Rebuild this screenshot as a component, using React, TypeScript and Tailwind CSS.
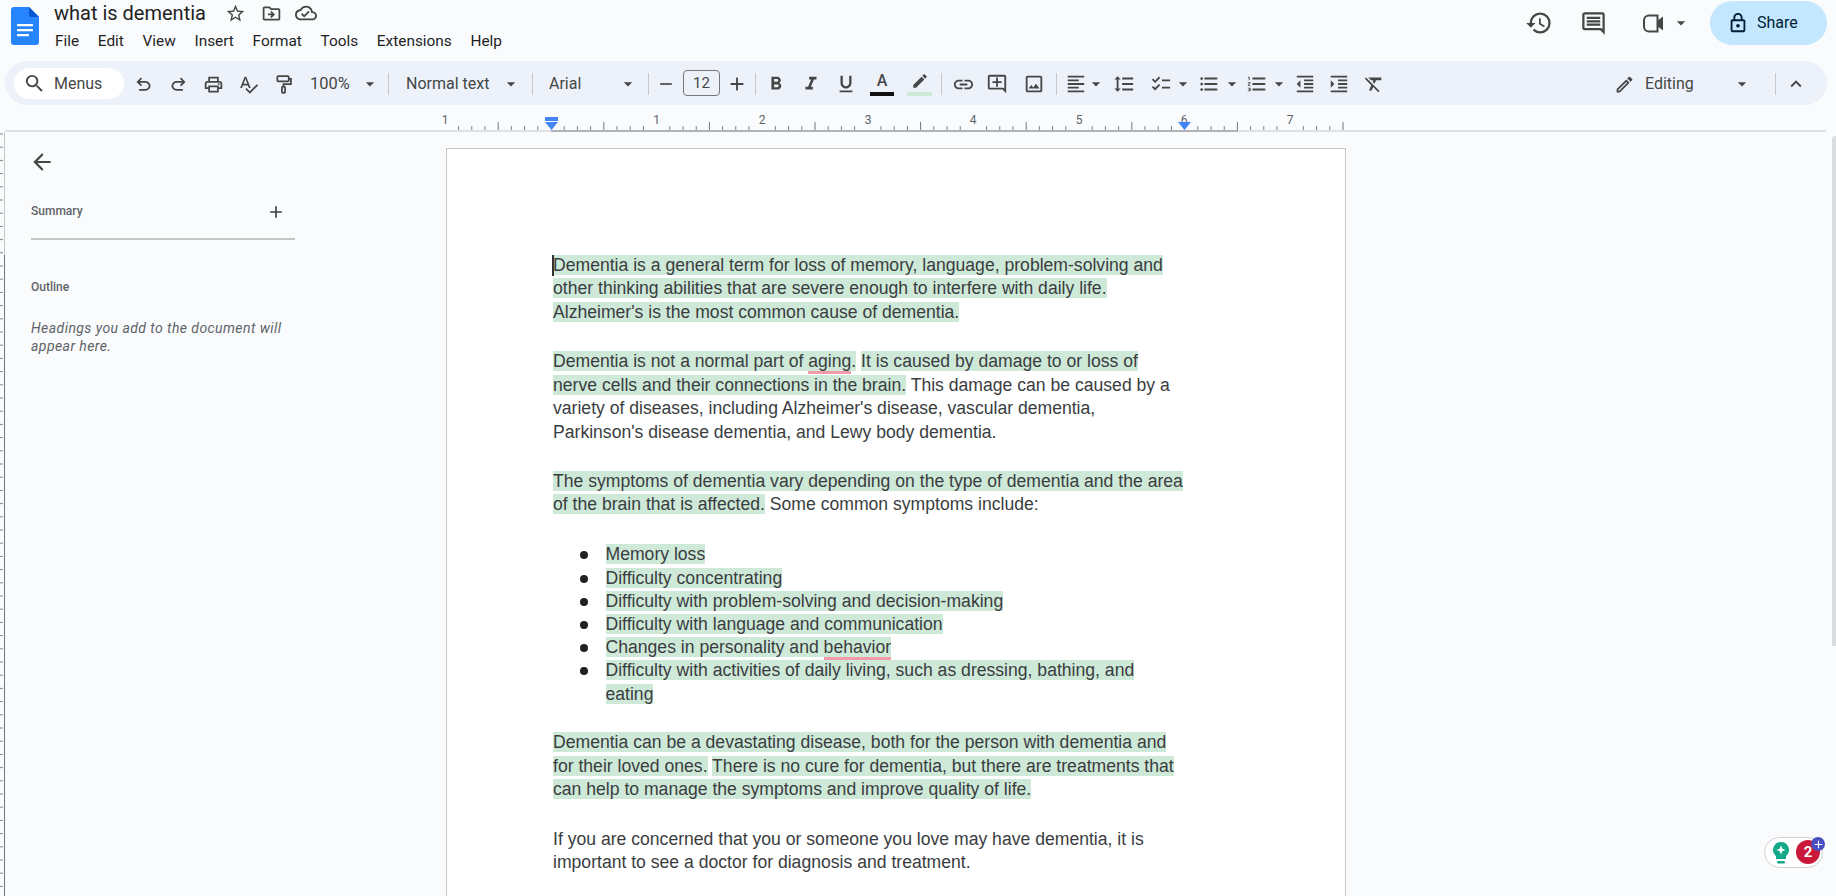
import React from "react";
import {
  MdSearch, MdOutlinePrint, MdOutlineSpellcheck, MdArrowDropDown,
  MdRemove, MdAdd, MdFormatBold, MdFormatItalic, MdFormatUnderlined, MdEdit, MdLink, MdOutlineAddComment,
  MdOutlineImage, MdFormatAlignLeft, MdFormatLineSpacing, MdChecklist, MdFormatListBulleted,
  MdFormatListNumbered, MdFormatIndentDecrease, MdFormatIndentIncrease, MdFormatClear, MdOutlineEdit,
  MdKeyboardArrowUp, MdHistory, MdOutlineComment, MdOutlineLock, MdArrowBack,
  MdStarBorder, MdOutlineDriveFileMove, MdOutlineCloudDone,
} from "react-icons/md";

const Slot = ({ className, children }: { className: string; children: React.ReactNode }) => (
  <span className={"flex items-center justify-center shrink-0 text-[#444746] " + className}>{children}</span>
);
const Sep = ({ className }: { className: string }) => (
  <span className={"w-px h-[22px] bg-[#c7c9cc] shrink-0 " + className} />
);
const Caret = ({ className }: { className: string }) => (
  <Slot className={"w-5 " + className}><MdArrowDropDown size={20} /></Slot>
);

const UndoIcon = () => (
  <svg width="21" height="21" viewBox="0 -960 960 960" fill="currentColor">
    <path d="M280-200v-80h284q63 0 109.5-40T720-420q0-60-46.5-100T564-560H312l104 104-56 56-200-200 200-200 56 56-104 104h252q97 0 166.5 63T800-420q0 94-69.5 157T564-200H280Z" />
  </svg>
);
const RedoIcon = () => (
  <svg width="21" height="21" viewBox="0 -960 960 960" fill="currentColor">
    <path d="M396-200q-97 0-166.5-63T160-420q0-94 69.5-157T396-640h252L544-744l56-56 200 200-200 200-56-56 104-104H396q-63 0-109.5 40T240-420q0 60 46.5 100T396-280h284v80H396Z" />
  </svg>
);
const PaintIcon = () => (
  <svg width="21" height="21" viewBox="0 0 24 24" fill="none" stroke="currentColor" strokeWidth="2">
    <rect x="5" y="2.5" width="13" height="6" rx="1" />
    <path d="M18 5.5h2.5v6H12v3" />
    <rect x="10.2" y="14.5" width="3.6" height="7" rx="1" />
  </svg>
);
const VideoIcon = () => (
  <svg width="25" height="25" viewBox="0 0 25 25" fill="none">
    <path d="M8 4.5h8.5v16H8A5 5 0 0 1 3 15.5v-6A5 5 0 0 1 8 4.5z" stroke="currentColor" strokeWidth="2" />
    <path d="M16 10l6-4.5v14L16 15z" fill="currentColor" />
  </svg>
);

function DocsLogo() {
  return (
    <svg width="28" height="38" viewBox="0 0 28 38" className="shrink-0">
      <path d="M3 0h15l10 10v25a3 3 0 0 1-3 3H3a3 3 0 0 1-3-3V3a3 3 0 0 1 3-3z" fill="#2684fc" />
      <path d="M18 0l10 10H20a2 2 0 0 1-2-2z" fill="#0b57d0" />
      <rect x="6" y="17" width="16" height="2.2" rx="0.5" fill="#fff" />
      <rect x="6" y="22" width="16" height="2.2" rx="0.5" fill="#fff" />
      <rect x="6" y="27" width="12" height="2.2" rx="0.5" fill="#fff" />
    </svg>
  );
}

function HRuler() {
  const ticks: React.ReactNode[] = [];
  const zero = 551;
  const step = 105.6 / 8;
  for (let i = -8; i <= 60; i++) {
    const x = zero + i * step;
    if (x > 1345) break;
    if (i % 8 === 0 && i !== 60) continue;
    const half = i % 4 === 0;
    ticks.push(
      <line key={i} x1={x} x2={x} y1={half ? 17 : 21} y2={25} stroke={half ? "#70757a" : "#80868b"} strokeWidth="1" />
    );
  }
  const nums = [[445, "1"], [656.6, "1"], [762, "2"], [868, "3"], [973, "4"], [1079, "5"], [1184, "6"], [1290, "7"]] as const;
  return (
    <svg width="1836" height="27" viewBox="0 0 1836 27" className="block shrink-0">
      {ticks}
      <line x1="5" x2="1826" y1="26" y2="26" stroke="#c4c7c5" strokeWidth="1.2" />
      <line x1="551" x2="1238" y1="26" y2="26" stroke="#80868b" strokeWidth="1.2" />
      {nums.map(([x, t], i) => (
        <text key={i} x={x} y="19" textAnchor="middle" fontSize="12" fontFamily="Roboto, sans-serif" fill="#5f6368">{t}</text>
      ))}
      <rect x="545" y="12" width="13" height="4" fill="#4285f4" />
      <path d="M545 17h13l-6.5 8z" fill="#4285f4" />
      <path d="M1178 17h13l-6.5 8z" fill="#4285f4" />
    </svg>
  );
}

function VRuler() {
  const ticks: React.ReactNode[] = [];
  for (let i = 0; i < 60; i++) {
    const y = 2 + i * 13.2;
    ticks.push(<line key={i} x1="0" x2="3" y1={y} y2={y} stroke="#80868b" strokeWidth="1" />);
  }
  return (
    <svg width="5" height="765" viewBox="0 0 5 765" className="block shrink-0">
      <line x1="4.5" x2="4.5" y1="0" y2="123" stroke="#c4c7c5" strokeWidth="1" />
      <line x1="4.5" x2="4.5" y1="123" y2="765" stroke="#70757a" strokeWidth="1" />
      {ticks}
    </svg>
  );
}

const H = ({ children }: { children: React.ReactNode }) => <span className="bg-[#cfe9d9]">{children}</span>;
const Spell = ({ children }: { children: React.ReactNode }) => (
  <span className="border-b-[3px] border-[#f29cab]">{children}</span>
);

function Li({ children }: { children: React.ReactNode }) {
  return (
    <li className="flex leading-[23.2px]">
      <span className="w-[52.5px] shrink-0 flex justify-start pl-[27px] pt-[8px]">
        <span className="block w-2 h-2 rounded-full bg-[#222]" />
      </span>
      <span>{children}</span>
    </li>
  );
}

export default function App() {
  return (
    <div className="w-[1836px] h-[896px] overflow-hidden bg-[#f9fbfd] font-['Roboto',sans-serif] relative">
      {/* title bar */}
      <header className="h-[61px] flex">
        <div className="ml-[11px] mt-[7px]"><DocsLogo /></div>
        <div className="ml-[15px] flex flex-col">
          <div className="flex items-center h-[26px]">
            <span className="w-[151px] text-[20px] leading-[26px] text-[#1f1f1f] whitespace-nowrap">what is dementia</span>
            <Slot className="w-6 ml-[18px]"><MdStarBorder size={21} /></Slot>
            <Slot className="w-6 ml-[12px]"><MdOutlineDriveFileMove size={21} /></Slot>
            <Slot className="w-6 ml-[11px]"><MdOutlineCloudDone size={22} /></Slot>
          </div>
          <nav className="flex gap-[18.67px] mt-[4px] text-[15.4px] leading-[22px] text-[#1f1f1f] ml-[1px]">
            <span>File</span><span>Edit</span><span>View</span><span>Insert</span><span>Format</span><span>Tools</span><span>Extensions</span><span>Help</span>
          </nav>
        </div>
        <div className="ml-auto flex items-start mr-[9px] mt-[1px]">
          <Slot className="w-7 h-[44px]"><MdHistory size={28} /></Slot>
          <Slot className="w-7 h-[44px] ml-[26px]"><MdOutlineComment size={27} /></Slot>
          <Slot className="w-7 h-[44px] ml-[32px]"><VideoIcon /></Slot>
          <Slot className="w-5 h-[44px] ml-[4px]"><MdArrowDropDown size={20} /></Slot>
          <button className="ml-[19px] w-[117px] h-[44px] rounded-full bg-[#c2e7ff] flex items-center text-[#001d35] text-[16px]">
            <span className="ml-[17px] flex"><MdOutlineLock size={22} /></span>
            <span className="ml-[8px]">Share</span>
          </button>
        </div>
      </header>

      {/* toolbar */}
      <div className="mx-[5px] mr-[9px] h-[44px] pt-[2px] rounded-full bg-[#edf2fa] flex items-center text-[#444746] text-[16px]">
        <div className="ml-[9px] w-[110px] h-[31px] -mt-[2px] rounded-full bg-white flex items-center shrink-0">
          <Slot className="w-6 ml-[8px]"><MdSearch size={23} /></Slot>
          <span className="ml-[8px] mt-[2px]">Menus</span>
        </div>
        <Slot className="w-[35px] ml-[1.5px]"><UndoIcon /></Slot>
        <Slot className="w-[35px]"><RedoIcon /></Slot>
        <Slot className="w-[35px]"><MdOutlinePrint size={21} /></Slot>
        <Slot className="w-[35px]"><MdOutlineSpellcheck size={21} /></Slot>
        <Slot className="w-[35px]"><PaintIcon /></Slot>
        <span className="ml-[9.5px] w-[40px] shrink-0 text-[16.4px]">100%</span>
        <Caret className="ml-[10px]" />
        <Sep className="ml-[8px]" />
        <span className="ml-[17px] w-[83px] shrink-0 whitespace-nowrap">Normal text</span>
        <Caret className="ml-[12px]" />
        <Sep className="ml-[11px]" />
        <span className="ml-[16px] w-[33px] shrink-0">Arial</span>
        <Caret className="ml-[36px]" />
        <Sep className="ml-[10px]" />
        <Slot className="w-6 ml-[5px]"><MdRemove size={20} /></Slot>
        <span className="ml-[5px] w-[37px] h-[26px] -mt-[2px] shrink-0 rounded-[4px] border border-[#747775] flex items-center justify-center text-[15px]">12</span>
        <Slot className="w-6 ml-[5px]"><MdAdd size={22} /></Slot>
        <Sep className="ml-[6px]" />
        <Slot className="w-[35px] ml-[2.5px]"><MdFormatBold size={22} /></Slot>
        <Slot className="w-[35px]"><MdFormatItalic size={22} /></Slot>
        <Slot className="w-[35px]"><MdFormatUnderlined size={22} /></Slot>
        <span className="w-[24px] ml-[6.5px] shrink-0 flex flex-col items-center -mt-[2px]">
          <span className="text-[16px] leading-[20px] font-medium">A</span>
          <span className="block w-full h-[4px] bg-[#111] mt-[1px]" />
        </span>
        <span className="w-[25px] ml-[13px] shrink-0 flex flex-col items-center -mt-[2px]">
          <span className="flex h-[20px] items-center"><MdEdit size={18} /></span>
          <span className="block w-full h-[4px] bg-[#cfe9d9] mt-[1px]" />
        </span>
        <Sep className="ml-[9px]" />
        <Slot className="w-[34px] ml-[4px]"><MdLink size={23} /></Slot>
        <Slot className="w-[34px]"><MdOutlineAddComment size={22} /></Slot>
        <Slot className="w-[34px] ml-[3px]"><MdOutlineImage size={22} /></Slot>
        <Sep className="ml-[5px]" />
        <Slot className="w-6 ml-[7px]"><MdFormatAlignLeft size={22} /></Slot>
        <Caret className="-ml-[2px]" />
        <Slot className="w-6 ml-[6px]"><MdFormatLineSpacing size={22} /></Slot>
        <Slot className="w-6 ml-[13px]"><MdChecklist size={22} /></Slot>
        <Caret className="" />
        <Slot className="w-6 ml-[4px]"><MdFormatListBulleted size={22} /></Slot>
        <Caret className="ml-[1px]" />
        <Slot className="w-6 ml-[3px]"><MdFormatListNumbered size={22} /></Slot>
        <Caret className="" />
        <Slot className="w-6 ml-[4px]"><MdFormatIndentDecrease size={22} /></Slot>
        <Slot className="w-6 ml-[10px]"><MdFormatIndentIncrease size={22} /></Slot>
        <Slot className="w-6 ml-[11px]"><MdFormatClear size={22} /></Slot>
        <Slot className="w-[22px] ml-auto"><MdOutlineEdit size={21} /></Slot>
        <span className="ml-[10px] w-[49px] shrink-0">Editing</span>
        <Caret className="ml-[38px]" />
        <Sep className="ml-[23px]" />
        <Slot className="w-6 ml-[8px] mr-[19px]"><MdKeyboardArrowUp size={22} /></Slot>
      </div>

      {/* ruler */}
      <HRuler />

      {/* main */}
      <main className="flex">
        <VRuler />
        <aside className="w-[441px] shrink-0 pl-[26px] text-[#5f6368]">
          <div className="mt-[17px] -ml-[2px] flex text-[#444746]"><MdArrowBack size={26} /></div>
          <div className="mt-[25px] w-[264px] h-[40px] border-b-2 border-[#c4c7c5] flex justify-between items-start">
            <span className="text-[12px] leading-[16px] font-medium mt-[3px]">Summary</span>
            <span className="mr-[9px] text-[#3c4043] flex mt-[2px]"><MdAdd size={20} /></span>
          </div>
          <div className="mt-[39px] text-[12px] leading-[16px] font-medium">Outline</div>
          <p className="mt-[24px] w-[264px] text-[14px] leading-[18px] italic tracking-[0.43px]">
            Headings you add to the document will<br />appear here.
          </p>
        </aside>
        <section className="w-[900px] h-[800px] mt-[16px] bg-white border-t border-x border-[#c4c7c5] shrink-0 pl-[106px] pt-[105px] font-['Liberation_Sans',Arial,sans-serif] text-[17.6px] leading-[23.45px] text-[#3a3d3f] whitespace-nowrap">
          <p className="relative">
            <span className="absolute left-[-1px] top-[1px] w-[2px] h-[21px] bg-[#333]" />
            <H>Dementia is a general term for loss of memory, language, problem-solving and</H><br />
            <H>other thinking abilities that are severe enough to interfere with daily life.</H><br />
            <H>Alzheimer's is the most common cause of dementia.</H>
          </p>
          <p className="mt-[25.8px]">
            <H>Dementia is not a normal part of <Spell>aging</Spell>.</H> <H>It is caused by damage to or loss of</H><br />
            <H>nerve cells and their connections in the brain.</H> This damage can be caused by a<br />
            variety of diseases, including Alzheimer's disease, vascular dementia,<br />
            Parkinson's disease dementia, and Lewy body dementia.
          </p>
          <p className="mt-[25.8px]">
            <H>The symptoms of dementia vary depending on the type of dementia and the area</H><br />
            <H>of the brain that is affected.</H> Some common symptoms include:
          </p>
          <ul className="mt-[26.8px]">
            <Li><H>Memory loss</H></Li>
            <Li><H>Difficulty concentrating</H></Li>
            <Li><H>Difficulty with problem-solving and decision-making</H></Li>
            <Li><H>Difficulty with language and communication</H></Li>
            <Li><H>Changes in personality and <Spell>behavior</Spell></H></Li>
            <Li><H>Difficulty with activities of daily living, such as dressing, bathing, and</H><br /><H>eating</H></Li>
          </ul>
          <p className="mt-[25.5px]">
            <H>Dementia can be a devastating disease, both for the person with dementia and</H><br />
            <H>for their loved ones.</H> <H>There is no cure for dementia, but there are treatments that</H><br />
            <H>can help to manage the symptoms and improve quality of life.</H>
          </p>
          <p className="mt-[25.8px]">
            If you are concerned that you or someone you love may have dementia, it is<br />
            important to see a doctor for diagnosis and treatment.
          </p>
        </section>
      </main>

      {/* scrollbar */}
      <div className="absolute right-0 top-[136px] w-[4px] h-[510px] bg-[#dadce0] rounded-tl-[3px]" />

      {/* floating badge */}
      <div className="absolute left-[1764px] top-[837px] w-[59px] h-[31px] rounded-full border border-[#cfd1d4] bg-white">
        <svg width="18" height="24" viewBox="0 0 18 24" className="absolute left-[7px] top-[3px]">
          <path d="M9 1a8 8 0 0 1 5 14.2V18H4v-2.8A8 8 0 0 1 9 1z" fill="#12a888" />
          <path d="M9 4.5l1.3 3.2L13.5 9l-3.2 1.3L9 13.5l-1.3-3.2L4.5 9l3.2-1.3z" fill="#fff" />
          <rect x="5" y="20" width="8" height="2.5" rx="1.2" fill="#12a888" />
        </svg>
        <span className="absolute left-[31px] top-[2px] w-6 h-6 rounded-full bg-[#c9183a] flex items-center justify-center text-white text-[15px] font-bold">2</span>
        <span className="absolute left-[46px] top-[-1px] w-[14px] h-[14px] rounded-full bg-[#4a4fbf] flex items-center justify-center text-white"><MdAdd size={13} /></span>
      </div>
    </div>
  );
}
